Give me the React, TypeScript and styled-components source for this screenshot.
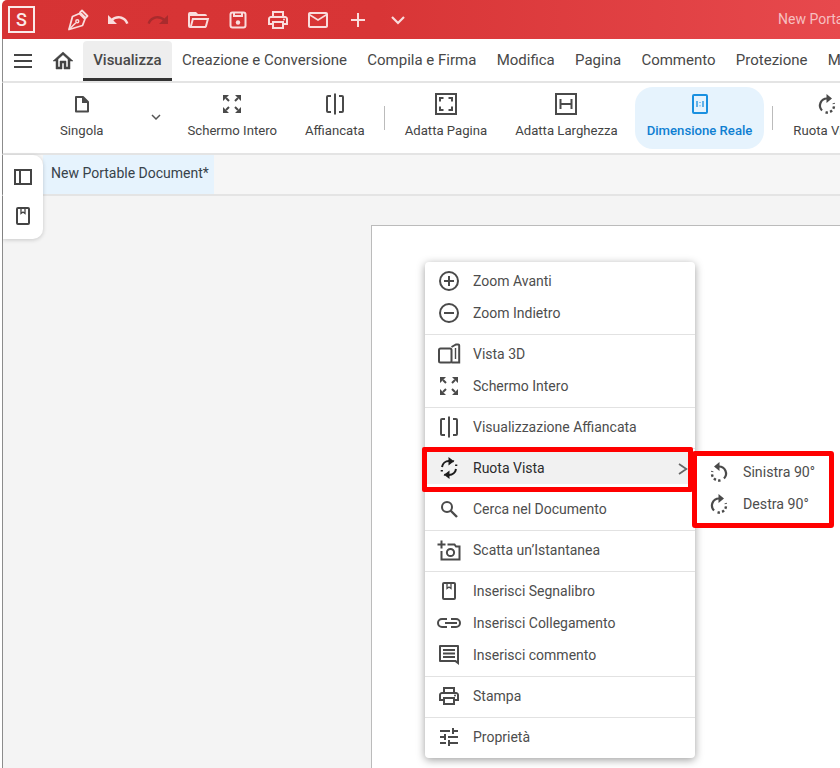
import React from 'react'
import styled, { createGlobalStyle } from 'styled-components'

const GlobalStyle = createGlobalStyle`
  html, body {
    margin: 0;
    height: 100%;
    background: #fff;
    overflow: hidden;
  }
  #root {
    height: 100%;
  }
`

const Shell = styled.div`
  position: relative;
  width: 838px;
  height: 768px;
  margin-left: 2px;
  overflow: hidden;
  font-family: Roboto, "Liberation Sans", sans-serif;
  color: #444;
`

const TitleBar = styled.div`
  height: 39px;
  display: flex;
  align-items: center;
  padding-left: 6px;
  border-top-left-radius: 5px;
  background: linear-gradient(90deg, #d63334 0%, #d83536 45%, #e7494d 100%);
`

const Logo = styled.div`
  width: 27px;
  height: 27px;
  box-sizing: border-box;
  border: 2px solid #fbeaea;
  color: #fbeaea;
  font-size: 18px;
  font-weight: 500;
  line-height: 23px;
  text-align: center;
  margin-right: 31px;
`

const QuickButton = styled.span<{ $off?: boolean }>`
  width: 24px;
  height: 24px;
  margin-right: 16px;
  display: flex;
  color: ${p => (p.$off ? '#a92b2d' : '#fadcdc')};
`

const DocTitle = styled.div`
  margin-left: auto;
  width: 62px;
  padding-bottom: 2px;
  white-space: nowrap;
  overflow: hidden;
  font-size: 14px;
  color: #f6bfc0;
`

const TabBar = styled.div`
  height: 44px;
  box-sizing: border-box;
  display: flex;
  align-items: flex-end;
  border-left: 1px solid #8c8c8c;
  border-bottom: 2px solid #e4e4e4;
  white-space: nowrap;
`

const IconSlot = styled.span`
  width: 40px;
  height: 40px;
  flex: none;
  display: flex;
  align-items: center;
  justify-content: center;
  color: #444;

  svg {
    width: 24px;
    height: 24px;
  }
`

const Tab = styled.div<{ $active?: boolean }>`
  height: 40px;
  box-sizing: border-box;
  padding: 0 10.15px;
  line-height: 39px;
  font-size: 15px;
  font-weight: ${p => (p.$active ? 500 : 400)};
  color: #484848;
  background: ${p => (p.$active ? '#eeeeee' : 'transparent')};
  border-bottom: ${p => (p.$active ? '3px solid #333' : 'none')};
  border-radius: 4px 4px 0 0;
`

const Toolbar = styled.div`
  height: 72px;
  box-sizing: border-box;
  display: flex;
  align-items: center;
  gap: 4px;
  padding-left: 45px;
  border-left: 1px solid #8c8c8c;
  border-bottom: 2px solid #e4e4e4;
  white-space: nowrap;
`

const ToolButton = styled.div<{ $active?: boolean }>`
  flex: none;
  height: 62px;
  box-sizing: border-box;
  margin: ${p => (p.$active ? '0 1px' : '0')};
  padding: 5px 12px 0;
  display: flex;
  flex-direction: column;
  align-items: center;
  gap: 7px;
  border-radius: 18px;
  font-size: 13.15px;
  font-weight: ${p => (p.$active ? 500 : 400)};
  color: ${p => (p.$active ? '#0f7fd2' : '#444')};
  background: ${p => (p.$active ? '#e6f3fd' : 'transparent')};
`

const ToolIcon = styled.span<{ $active?: boolean }>`
  width: 24px;
  height: 24px;
  display: flex;
  color: ${p => (p.$active ? '#1a90e0' : '#4a4a4a')};
`

const Caret = styled.span`
  flex: none;
  width: 16px;
  height: 16px;
  margin: 0 7px 2px 29px;
  display: flex;
  color: #555;
`

const ToolDivider = styled.span`
  flex: none;
  width: 1px;
  height: 24px;
  margin: 0 4px 0 3px;
  background: #bbb;
`

const DocBar = styled.div`
  height: 41px;
  box-sizing: border-box;
  padding-left: 40px;
  display: flex;
  border-left: 1px solid #8c8c8c;
  border-bottom: 2px solid #e4e4e4;
  background: #f6f6f6;
`

const DocTab = styled.div`
  padding: 0 5px 0 8px;
  line-height: 37px;
  font-size: 14px;
  color: #37424a;
  background: #e6f3fd;
`

const Canvas = styled.div`
  height: 572px;
  box-sizing: border-box;
  padding: 29px 0 0 368px;
  border-left: 1px solid #8c8c8c;
  background: #f4f4f4;
`

const Page = styled.div`
  height: 100%;
  background: #fff;
  border-top: 1px solid #bbb;
  border-left: 1px solid #bbb;
`

const SideRail = styled.div`
  position: absolute;
  left: 1px;
  top: 155px;
  width: 40px;
  height: 84px;
  padding-top: 10px;
  box-sizing: border-box;
  display: flex;
  flex-direction: column;
  align-items: center;
  gap: 15px;
  background: #fff;
  border-radius: 0 10px 10px 0;
  box-shadow: 0 1px 4px rgba(0, 0, 0, 0.18);
  color: #444;
`

const RailIcon = styled.span`
  width: 24px;
  height: 24px;
  display: flex;
`

const Menu = styled.div`
  position: absolute;
  left: 423px;
  top: 262px;
  width: 270px;
  background: #fff;
  border-radius: 4px;
  box-shadow: 0 2px 8px rgba(0, 0, 0, 0.38);
`

const MenuGroup = styled.div`
  padding: 3px 0 5px;
  & + & {
    border-top: 1px solid #e2e2e2;
  }
`

const MenuRow = styled.div<{ $hover?: boolean }>`
  position: relative;
  height: 32px;
  display: flex;
  align-items: center;
  font-size: 14px;
  color: ${p => (p.$hover ? '#2c2c2c' : '#4d4d4d')};
  background: ${p => (p.$hover ? '#f1f1f1' : 'transparent')};
`

const MenuIcon = styled.span<{ $hover?: boolean }>`
  width: 24px;
  height: 24px;
  margin: 0 12px;
  display: flex;
  color: ${p => (p.$hover ? '#1c1c1c' : '#4a4a4a')};
`

const RowArrow = styled.span`
  position: absolute;
  right: 4px;
  top: 9px;
  width: 16px;
  height: 16px;
  display: flex;
  color: #666;
`

const HighlightRow = styled.div`
  position: absolute;
  left: 420px;
  top: 447px;
  width: 271px;
  height: 45px;
  box-sizing: border-box;
  border: 5px solid #ff0000;
  border-radius: 2px;
`

const SubMenu = styled.div`
  position: absolute;
  left: 690px;
  top: 451px;
  width: 142px;
  height: 77px;
  box-sizing: border-box;
  padding-bottom: 3px;
  background: #fff;
  border: 5px solid #ff0000;
  border-radius: 3px;
`

const SubRow = styled.div`
  height: 32px;
  display: flex;
  align-items: center;
  font-size: 14.2px;
  color: #4d4d4d;
`

const SubIcon = styled.span`
  width: 24px;
  height: 24px;
  margin: 0 12px 0 10px;
  display: flex;
  color: #4a4a4a;
`

type IconProps = { children: React.ReactNode }

const Fill = ({ children }: IconProps) => (
  <svg viewBox="0 0 24 24" width="100%" height="100%" fill="currentColor">{children}</svg>
)

const Line = ({ children }: IconProps) => (
  <svg viewBox="0 0 24 24" width="100%" height="100%" fill="none" stroke="currentColor" strokeWidth="2">{children}</svg>
)

const PenIcon = () => (
  <Line>
    <path d="M16 2.5l5.5 5.5-2 2L14 4.5z" strokeWidth="1.8" strokeLinejoin="round" />
    <path d="M13.5 5.5l5.5 5.5-2.5 6.5L3 21.5l3.5-13z" strokeWidth="1.8" strokeLinejoin="round" />
    <path d="M3 21.5l6.8-6.8" strokeWidth="1.6" />
    <circle cx="11.3" cy="13.2" r="1.5" strokeWidth="1.4" />
  </Line>
)
const UndoIcon = () => (
  <Fill><path d="M12.5 8c-2.65 0-5.05.99-6.9 2.6L2 7v9h9l-3.62-3.62c1.39-1.16 3.16-1.88 5.12-1.88 3.54 0 6.55 2.31 7.6 5.5l2.37-.78C21.08 11.03 17.15 8 12.5 8z" /></Fill>
)
const RedoIcon = () => (
  <Fill><path d="M18.4 10.6C16.55 8.99 14.15 8 11.5 8c-4.65 0-8.58 3.03-9.96 7.22L3.9 16c1.05-3.19 4.05-5.5 7.6-5.5 1.95 0 3.73.72 5.12 1.88L13 16h9V7l-3.6 3.6z" /></Fill>
)
const FolderIcon = () => (
  <Fill><path d="M6.1 10L4 18V8H21A2 2 0 0 0 19 6H12L10 4H4A2 2 0 0 0 2 6V18A2 2 0 0 0 4 20H19C19.9 20 20.7 19.4 20.9 18.5L23.2 10H6.1M19 18H6L7.6 12H20.6L19 18Z" /></Fill>
)
const SaveIcon = () => (
  <Line>
    <rect x="4.5" y="4.5" width="15" height="15" rx="2" />
    <path d="M8 4.5v3.5h8V4.5" />
    <circle cx="12" cy="14.5" r="2.2" fill="currentColor" stroke="none" />
  </Line>
)
const PrintIcon = () => (
  <Fill>
    <path d="M19 8h-1V3H6v5H5c-1.66 0-3 1.34-3 3v6h4v4h12v-4h4v-6c0-1.66-1.34-3-3-3zM8 5h8v3H8V5zm8 12v2H8v-4h8v2zm2-2v-2H6v2H4v-4c0-.55.45-1 1-1h14c.55 0 1 .45 1 1v4h-2z" />
    <circle cx="18" cy="11.5" r="1" />
  </Fill>
)
const MailIcon = () => (
  <Fill><path d="M20 4H4c-1.1 0-1.99.9-1.99 2L2 18c0 1.1.9 2 2 2h16c1.1 0 2-.9 2-2V6c0-1.1-.9-2-2-2zm0 14H4V8l8 5 8-5v10zm-8-7L4 6h16l-8 5z" /></Fill>
)
const PlusIcon = () => <Line><path d="M12 5v14M5 12h14" /></Line>
const ChevronDown = () => <Line><path d="M6 9l6 6 6-6" strokeWidth="2.2" /></Line>
const ChevronRight = () => <Line><path d="M6 4.5l11 7.5-11 7.5" strokeWidth="2.6" /></Line>
const MenuLines = () => <Line><path d="M3 6h18M3 12h18M3 18h18" /></Line>
const HomeIcon = () => (
  <Fill><path d="M12 5.69l5 4.5V18h-2v-6H9v6H7v-7.81l5-4.5M12 3L2 12h3v8h6v-6h2v6h6v-8h3L12 3z" stroke="currentColor" strokeWidth="0.5" /></Fill>
)
const PageIcon = () => (
  <Line>
    <path d="M6 5h7l5 5v9.5H6z" strokeLinejoin="round" />
    <path d="M13 5v5h5" fill="currentColor" />
  </Line>
)
const FullscreenIcon = () => (
  <Fill>
    <path d="M3 3h6L3 9zM21 3v6l-6-6zM3 21v-6l6 6zM21 21h-6l6-6z" />
    <path d="M6 6l3 3M18 6l-3 3M6 18l3-3M18 18l-3-3" stroke="currentColor" strokeWidth="2" />
  </Fill>
)
const SplitIcon = () => (
  <Line><path d="M8 4H5a1 1 0 0 0-1 1v14a1 1 0 0 0 1 1h3M16 4h3a1 1 0 0 1 1 1v14a1 1 0 0 1-1 1h-3M12 1.5v21" /></Line>
)
const FitPageIcon = () => (
  <Line>
    <rect x="2" y="2" width="20" height="20" />
    <path d="M6 9.5V6h3.5M14.5 6H18v3.5M18 14.5V18h-3.5M9.5 18H6v-3.5" />
  </Line>
)
const FitWidthIcon = () => (
  <Line>
    <rect x="2" y="2" width="20" height="20" />
    <path d="M6.5 7v10M17.5 7v10M6.5 12h11" />
  </Line>
)
const ActualSizeIcon = () => (
  <Line>
    <rect x="5" y="3" width="14" height="18" rx="1" />
    <path d="M9 9v6M15 9v6M12 10v.8M12 13.4v.8" strokeWidth="1.3" />
  </Line>
)
const RotateArc = () => (
  <>
    <path d="M12 6.5A7 7 0 0 0 7 18.4" strokeWidth="2.2" />
    <path d="M11.5 2v9l5.5-4.5z" fill="currentColor" stroke="none" />
    <path d="M10.5 20.4A7 7 0 0 0 18.6 11.2" strokeWidth="2.4" strokeDasharray="2.4 2.2" />
  </>
)
const RotateRightIcon = () => <Line><RotateArc /></Line>
const RotateLeftIcon = () => (
  <Line><g transform="matrix(-1 0 0 1 24 0)"><RotateArc /></g></Line>
)
const RotateBothIcon = () => (
  <Line>
    <path d="M5 11a7 7 0 0 1 7-6" />
    <path d="M19 13a7 7 0 0 1-7 6" />
    <path d="M11.5 1v8.5L17 5.2zM12.5 23v-8.5L7 18.8z" fill="currentColor" stroke="none" />
    <path d="M4.8 14v1.5M19.2 8.5v1.5M7.3 18.4l.8.6M16.7 5.6l-.8-.6" strokeWidth="2.2" />
  </Line>
)
const PanelIcon = () => (
  <Line><rect x="4" y="5" width="16" height="14" /><path d="M9 5v14" /></Line>
)
const BookmarkIcon = () => (
  <Line>
    <rect x="6" y="4" width="12" height="16" rx="1" />
    <path d="M10 4.5v5l2-1.5 2 1.5v-5" strokeWidth="1.3" />
  </Line>
)
const ZoomInIcon = () => <Line><circle cx="12" cy="12" r="9" /><path d="M7 12h10M12 7v10" /></Line>
const ZoomOutIcon = () => <Line><circle cx="12" cy="12" r="9" /><path d="M7 12h10" /></Line>
const View3dIcon = () => (
  <Line>
    <rect x="2" y="6.5" width="12.5" height="14" rx="1.5" />
    <path d="M14.5 5L19 2.5h2.2a1 1 0 0 1 1 1V20.5h-7.7" />
    <path d="M18.5 6v11" strokeWidth="1.4" />
  </Line>
)
const SearchIcon = () => (
  <Line><circle cx="10" cy="10" r="5" /><path d="M13.5 13.5l6.5 6.5" strokeWidth="2.4" /></Line>
)
const CameraIcon = () => (
  <Line>
    <path d="M.5 6.5h8M4.5 2.5v8" />
    <path d="M10.5 6.5h7l1.5 2h3.5v13H4.5V13" />
    <circle cx="13.5" cy="14.5" r="3.6" />
  </Line>
)
const LinkIcon = () => (
  <Line>
    <path d="M10 8H5a4 4 0 0 0 0 8h5M14 8h5a4 4 0 0 1 0 8h-5M8 12h12" />
  </Line>
)
const CommentIcon = () => (
  <Fill><path d="M3 2h18a1 1 0 0 1 1 1v19l-4-3H3a1 1 0 0 1-1-1V3a1 1 0 0 1 1-1zm1 2v13h15l1 1V4zM6 6h12v2H6zM6 9.5h12v2H6zM6 13h12v2H6z" fillRule="evenodd" /></Fill>
)
const TuneIcon = () => (
  <Fill><path d="M3 17v2h6v-2H3zM3 5v2h10V5H3zm10 16v-2h8v-2h-8v-2h-2v6h2zM7 9v2H3v2h4v2h2V9H7zm14 4v-2H11v2h10zm-6-4h2V7h4V5h-4V3h-2v6z" /></Fill>
)

const quickActions = [
  { icon: <PenIcon />, off: false },
  { icon: <UndoIcon />, off: false },
  { icon: <RedoIcon />, off: true },
  { icon: <FolderIcon />, off: false },
  { icon: <SaveIcon />, off: false },
  { icon: <PrintIcon />, off: false },
  { icon: <MailIcon />, off: false },
  { icon: <PlusIcon />, off: false },
  { icon: <ChevronDown />, off: false },
]

const tabs = ['Creazione e Conversione', 'Compila e Firma', 'Modifica', 'Pagina', 'Commento', 'Protezione', 'Moduli']

const menuGroups = [
  [
    { label: 'Zoom Avanti', icon: <ZoomInIcon /> },
    { label: 'Zoom Indietro', icon: <ZoomOutIcon /> },
  ],
  [
    { label: 'Vista 3D', icon: <View3dIcon /> },
    { label: 'Schermo Intero', icon: <FullscreenIcon /> },
  ],
  [{ label: 'Visualizzazione Affiancata', icon: <SplitIcon /> }],
  [{ label: 'Ruota Vista', icon: <RotateBothIcon />, hover: true }],
  [{ label: 'Cerca nel Documento', icon: <SearchIcon /> }],
  [{ label: 'Scatta un’Istantanea', icon: <CameraIcon /> }],
  [
    { label: 'Inserisci Segnalibro', icon: <BookmarkIcon /> },
    { label: 'Inserisci Collegamento', icon: <LinkIcon /> },
    { label: 'Inserisci commento', icon: <CommentIcon /> },
  ],
  [{ label: 'Stampa', icon: <PrintIcon /> }],
  [{ label: 'Proprietà', icon: <TuneIcon /> }],
]

export default function App() {
  return (
    <>
      <GlobalStyle />
      <Shell>
        <TitleBar>
          <Logo>S</Logo>
          {quickActions.map((action, i) => (
            <QuickButton key={i} $off={action.off}>{action.icon}</QuickButton>
          ))}
          <DocTitle>New Portable Document*</DocTitle>
        </TitleBar>

        <TabBar>
          <IconSlot><MenuLines /></IconSlot>
          <IconSlot><HomeIcon /></IconSlot>
          <Tab $active>Visualizza</Tab>
          {tabs.map(tab => <Tab key={tab}>{tab}</Tab>)}
        </TabBar>

        <Toolbar>
          <ToolButton><ToolIcon><PageIcon /></ToolIcon>Singola</ToolButton>
          <Caret><ChevronDown /></Caret>
          <ToolButton><ToolIcon><FullscreenIcon /></ToolIcon>Schermo Intero</ToolButton>
          <ToolButton><ToolIcon><SplitIcon /></ToolIcon>Affiancata</ToolButton>
          <ToolDivider />
          <ToolButton><ToolIcon><FitPageIcon /></ToolIcon>Adatta Pagina</ToolButton>
          <ToolButton><ToolIcon><FitWidthIcon /></ToolIcon>Adatta Larghezza</ToolButton>
          <ToolButton $active><ToolIcon $active><ActualSizeIcon /></ToolIcon>Dimensione Reale</ToolButton>
          <ToolDivider />
          <ToolButton><ToolIcon><RotateRightIcon /></ToolIcon>Ruota Vista</ToolButton>
        </Toolbar>

        <DocBar><DocTab>New Portable Document*</DocTab></DocBar>

        <Canvas><Page /></Canvas>

        <SideRail>
          <RailIcon><PanelIcon /></RailIcon>
          <RailIcon><BookmarkIcon /></RailIcon>
        </SideRail>

        <Menu>
          {menuGroups.map((group, i) => (
            <MenuGroup key={i}>
              {group.map(item => (
                <MenuRow key={item.label} $hover={item.hover}>
                  <MenuIcon $hover={item.hover}>{item.icon}</MenuIcon>
                  {item.label}
                  {item.hover && <RowArrow><ChevronRight /></RowArrow>}
                </MenuRow>
              ))}
            </MenuGroup>
          ))}
        </Menu>

        <HighlightRow />
        <SubMenu>
          <SubRow><SubIcon><RotateLeftIcon /></SubIcon>Sinistra 90°</SubRow>
          <SubRow><SubIcon><RotateRightIcon /></SubIcon>Destra 90°</SubRow>
        </SubMenu>
      </Shell>
    </>
  )
}
